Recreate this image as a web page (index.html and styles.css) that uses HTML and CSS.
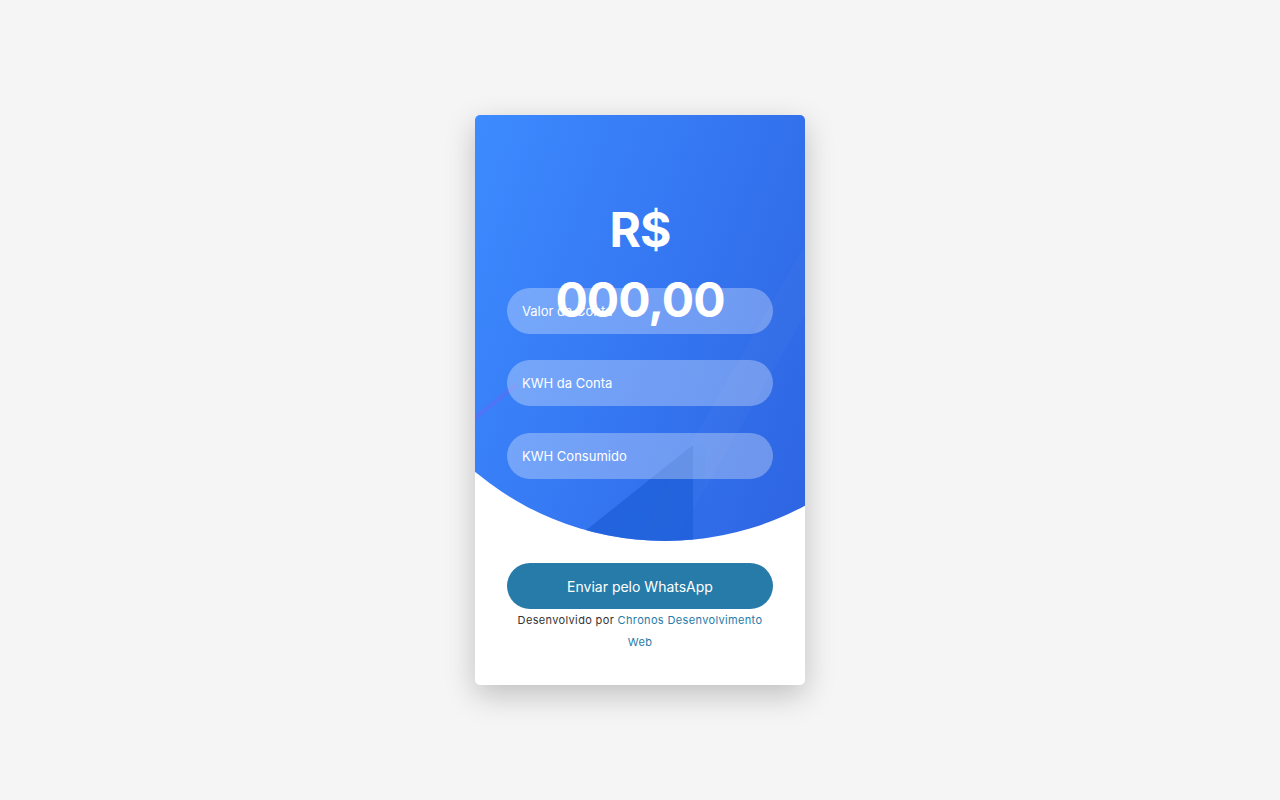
FILE: index.html
```html
<!DOCTYPE html>
<html lang="pt-BR">
<head>
<meta charset="utf-8">
<title>Calculadora</title>
<link rel="stylesheet" href="styles.css">
</head>
<body>
<main class="card">
  <div class="wave">
    <svg class="deco" width="330" height="426" viewBox="0 0 330 426">
      <polygon points="330,130 330,200 200,426 160,426" fill="#ffffff" opacity="0.025"/>
      <polygon points="0,300 40,268 42,272 0,306" fill="#7b5cf0" opacity="0.3"/>
      <polygon points="105,420 218,330 218,426 90,426" fill="#1d5fd8" opacity="0.75"/>
      <polygon points="218,330 218,426 230,426 230,330" fill="#2a6ee8" opacity="0.3"/>
    </svg>
  </div>
  <div class="content">
    <h1 class="total">R$<br>000,00</h1>
    <form class="form">
      <input class="field" type="text" placeholder="Valor da Conta">
      <input class="field" type="text" placeholder="KWH da Conta">
      <input class="field" type="text" placeholder="KWH Consumido">
      <button class="send" type="button">Enviar pelo WhatsApp</button>
    </form>
    <p class="credit">Desenvolvido por <a href="#">Chronos Desenvolvimento<br>Web</a></p>
  </div>
</main>
</body>
</html>
```
FILE: styles.css
```css
* { box-sizing: border-box; }
html, body { height: 100%; }
body {
  margin: 0;
  background: #f5f5f5;
  font-family: "Inter", "Noto Sans", sans-serif;
  display: flex;
  align-items: center;
  justify-content: center;
}
.card {
  position: relative;
  width: 330px;
  height: 570px;
  background: #fff;
  border-radius: 5px;
  box-shadow: 0 10px 30px rgba(0,0,0,0.22);
  overflow: hidden;
}
.wave {
  position: absolute;
  left: 0;
  top: 0;
  width: 330px;
  height: 426px;
  background: linear-gradient(110deg, #3d8bff 0%, #3577f2 50%, #2e64e1 100%);
  clip-path: circle(295px at 190px 131px);
}
.deco { display: block; }
.content {
  position: relative;
  padding: 0 32px 32px;
  display: flex;
  flex-direction: column;
}
.total {
  margin: 80px 0 0;
  height: 73px;
  color: #fff;
  font-size: 48px;
  line-height: 70px;
  font-weight: 700;
  text-align: center;
  letter-spacing: -1px;
}
.form {
  margin: 20px 0 0;
  display: flex;
  flex-direction: column;
}
.field {
  height: 46px;
  border: none;
  border-radius: 23px;
  background: rgba(255,255,255,0.3);
  padding: 0 15px;
  color: #fff;
  font-family: inherit;
  font-size: 13px;
  margin-bottom: 26px;
  outline: none;
}
.field:nth-of-type(2) { margin-bottom: 27px; }
.field::placeholder { color: #fff; opacity: 1; }
.field:last-of-type { margin-bottom: 84px; }
.send {
  height: 46px;
  border: none;
  border-radius: 23px;
  background: #267ba8;
  color: #fff;
  font-family: inherit;
  font-size: 14px;
  cursor: pointer;
}
.credit {
  margin: 0;
  text-align: center;
  font-size: 11px;
  line-height: 22px;
  letter-spacing: 0.35px;
  color: #333;
}
.credit a { color: #267ba8; text-decoration: none; }
```
